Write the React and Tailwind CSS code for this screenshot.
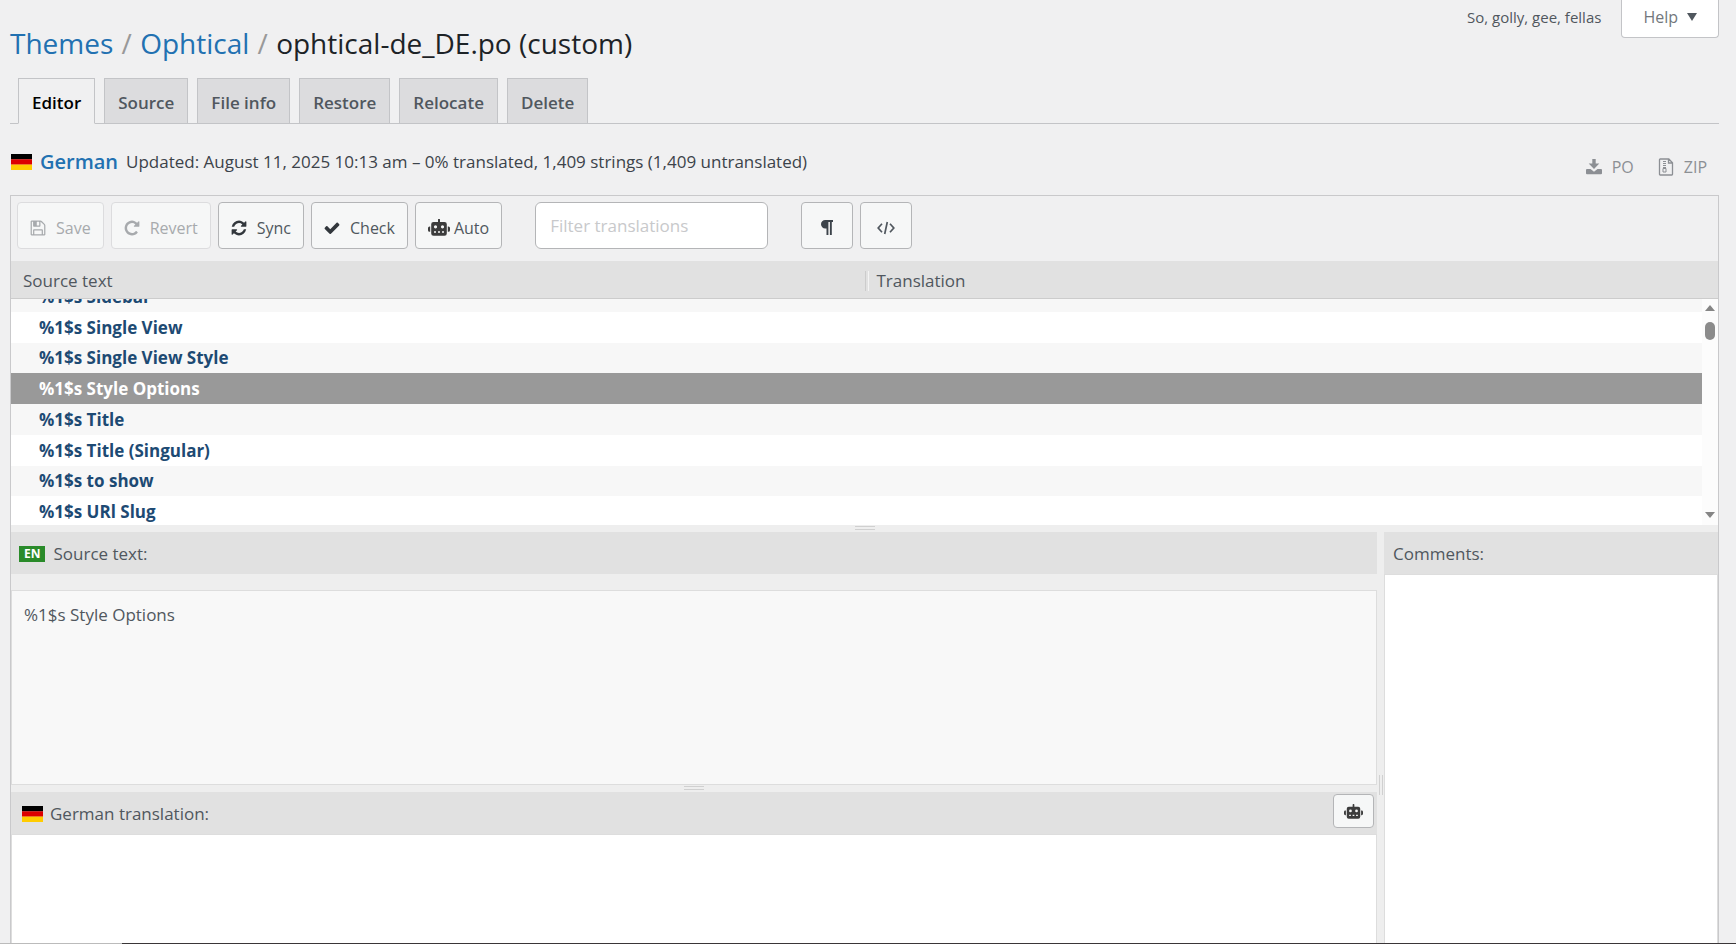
const TABS = ["Editor", "Source", "File info", "Restore", "Relocate", "Delete"];

const STRINGS = [
    "%1$s Sidebar",
    "%1$s Single View",
    "%1$s Single View Style",
    "%1$s Style Options",
    "%1$s Title",
    "%1$s Title (Singular)",
    "%1$s to show",
    "%1$s URl Slug",
];
const SELECTED = 3;

const PATHS = {
    save: "M512 1536h768v-384h-768v384zm896 0h128v-896q0-14-10-38.5t-20-34.5l-281-281q-10-10-34-20t-39-10v416q0 40-28 68t-68 28h-576q-40 0-68-28t-28-68v-416h-128v1280h128v-416q0-40 28-68t68-28h832q40 0 68 28t28 68v416zm-384-928v-320q0-13-9.5-22.5t-22.5-9.5h-192q-13 0-22.5 9.5t-9.5 22.5v320q0 13 9.5 22.5t22.5 9.5h192q13 0 22.5-9.5t9.5-22.5zm640 32v928q0 40-28 68t-68 28h-1344q-40 0-68-28t-28-68v-1344q0-40 28-68t68-28h928q40 0 88 20t76 48l280 280q28 28 48 76t20 88z",
    revert: "M1664 256v448q0 26-19 45t-45 19h-448q-42 0-59-40-17-39 14-69l138-138q-148-137-349-137-104 0-198.5 40.5t-163.5 109.5-109.5 163.5-40.5 198.5 40.5 198.5 109.5 163.5 163.5 109.5 198.5 40.5q119 0 225-52t179-147q7-10 23-12 15 0 25 9l137 138q9 8 9.5 20.5t-7.5 22.5q-109 132-264 204.5t-327 72.5q-156 0-298-61t-245-164-164-245-61-298 61-298 164-245 245-164 298-61q147 0 284.5 55.5t244.5 156.5l130-129q29-31 70-14 39 17 39 59z",
    sync: "M1639 1056q0 5-1 7-64 268-268 434.5t-478 166.5q-146 0-282.5-55t-243.5-157l-129 129q-19 19-45 19t-45-19-19-45v-448q0-26 19-45t45-19h448q26 0 45 19t19 45-19 45l-137 137q71 66 161 102t187 36q134 0 250-65t186-179q11-17 53-117 8-23 30-23h192q13 0 22.5 9.5t9.5 22.5zm25-800v448q0 26-19 45t-45 19h-448q-26 0-45-19t-19-45 19-45l138-138q-148-137-349-137-134 0-250 65t-186 179q-11 17-53 117-8 23-30 23h-199q-13 0-22.5-9.5t-9.5-22.5v-7q65-268 270-434.5t480-166.5q146 0 284 55.5t245 156.5l130-129q19-19 45-19t45 19 19 45z",
    check: "M1671 566q0 40-28 68l-724 724-136 136q-28 28-68 28t-68-28l-136-136-362-362q-28-28-28-68t28-68l136-136q28-28 68-28t68 28l294 295 656-657q28-28 68-28t68 28l136 136q28 28 28 68z",
};

const Icon = ({ name, className }) => (
    <svg viewBox="64 64 1664 1664" fill="currentColor" className={className} aria-hidden="true">
        <path d={PATHS[name]} />
    </svg>
);

const RobotIcon = ({ className }) => (
    <svg viewBox="0 0 22 17" fill="currentColor" className={className} aria-hidden="true">
        <path d="M0 9q0-1.600 1.600-1.600h.6v5.400h-.6Q0 12.800 0 11.200zM22 9q0-1.600-1.600-1.600h-.6v5.400h.6q1.600 0 1.600-1.600z" />
        <path
            fillRule="evenodd"
            d="M10 .8a1 1 0 0 1 2 0V3h4.500q2.300 0 2.300 2.300v9.200q0 2.300-2.300 2.300h-11q-2.300 0-2.300-2.300V5.300Q3.200 3 5.500 3H10zM7.500 6.200a1.600 1.600 0 1 0 0 3.200 1.600 1.600 0 0 0 0-3.200zm7 0a1.600 1.600 0 1 0 0 3.200 1.600 1.600 0 0 0 0-3.200zM6 12.300v1.500h2v-1.500zm4 0v1.500h2v-1.500zm4 0v1.500h2v-1.500z"
        />
    </svg>
);

const DownloadIcon = () => (
    <svg viewBox="0 0 16 16" fill="currentColor" className="size-4" aria-hidden="true">
        <path d="M6.300 0h3.400v4.600h3.600L8 10 2.700 4.600h3.600z" />
        <path d="M1 10h3.500L8 12.800l3.500-2.800H15q1 0 1 1v3.200q0 1-1 1H1q-1 0-1-1V11q0-1 1-1z" />
    </svg>
);

const ZipIcon = () => (
    <svg viewBox="0 0 16 18" fill="none" stroke="currentColor" className="h-[18px] w-4" aria-hidden="true">
        <path d="M2.200 1h8.600l3.700 3.700v11.600q0 .7-.7.7H2.200q-.7 0-.7-.7V1.700q0-.7.7-.7zM10.500 1v4h4" strokeWidth="1.3" />
        <path d="M6.500 3v8" strokeWidth="3" strokeDasharray="1 1" />
        <path d="M5 10.500h3V14H5z" />
    </svg>
);

const ParagraphIcon = () => (
    <svg viewBox="0 0 12 15" fill="currentColor" className="h-[15px] w-3" aria-hidden="true">
        <path d="M4.200 0H12v2h-1.200v13H8.900V2H7.400v13H5.500V8.400H4.200a4.200 4.200 0 0 1 0-8.400z" />
    </svg>
);

const CodeIcon = () => (
    <svg viewBox="0 0 18 14" fill="none" stroke="currentColor" strokeWidth="1.7" className="h-[14px] w-[18px]" aria-hidden="true">
        <path d="M5 2.800 1.200 7 5 11.200M13 2.800 16.800 7 13 11.200M10.300 1 7.700 13" />
    </svg>
);

const Flag = () => (
    <svg viewBox="0 0 21 16" className="h-4 w-[21px]" aria-hidden="true">
        <path fill="#000" d="M0 0h21v5.400H0z" />
        <path fill="#d00" d="M0 5.300h21v5.400H0z" />
        <path fill="#fc0" d="M0 10.600h21V16H0z" />
    </svg>
);

const ToolButton = ({ icon, children, disabled, gap = "gap-[10px]" }) => (
    <button
        type="button"
        disabled={disabled}
        className={`flex h-[47px] items-center rounded border px-3 pt-1 text-base ${gap} ${
            disabled
                ? "border-[#dcdcde] bg-[#f6f7f7] text-[#a7aaad]"
                : "border-[#b4b5b7] bg-[#f6f7f7] text-[#50575e]"
        }`}
    >
        {icon}
        {children}
    </button>
);

const Header = () => (
    <header>
        <div className="flex h-[78px] justify-between">
            <h1 className="pt-[23px] text-[28px] leading-10 text-[#1d2327]">
                <a href="#themes" className="text-[#2271b1]">Themes</a>
                <span className="mx-px text-[#999]"> / </span>
                <a href="#ophtical" className="text-[#2271b1]">Ophtical</a>
                <span className="mx-px text-[#999]"> / </span>
                ophtical-de_DE.po (custom)
            </h1>
            <div className="flex items-start">
                <p className="mr-5 pt-[7px] text-[15px] leading-5 text-[#50575e]">So, golly, gee, fellas</p>
                <button type="button" className="flex h-[38px] items-center gap-[9px] rounded-b border border-t-0 border-[#c3c4c7] bg-white px-[21px] pb-1 text-base text-[#72777c]">
                    Help
                    <svg viewBox="0 0 10 8" className="h-2 w-[10px] fill-[#50575e]" aria-hidden="true">
                        <path d="M0 0h10L5 8z" />
                    </svg>
                </button>
            </div>
        </div>
        <nav className="flex h-[46px] gap-[9px] border-b border-[#c3c4c7] pl-2">
            {TABS.map((tab, i) => (
                <a
                    key={tab}
                    href="#tab"
                    className={`flex items-center border border-[#c3c4c7] px-[13px] pt-1 text-[17px] font-semibold ${
                        i === 0 ? "-mb-px border-b-[#f0f0f1] bg-[#f0f0f1] text-black" : "border-b-0 bg-[#dcdcde] text-[#50575e]"
                    }`}
                >
                    {tab}
                </a>
            ))}
        </nav>
    </header>
);

const Summary = () => (
    <div className="flex h-[71px] justify-between pt-6">
        <p className="flex h-7 items-center pl-px text-[17px] text-[#3c434a]">
            <Flag />
            <a href="#german" className="mx-2 text-xl font-semibold text-[#2271b1]">German</a>
            Updated: August 11, 2025 10:13 am – 0% translated, 1,409 strings (1,409 untranslated)
        </p>
        <div className="mr-3 flex items-center gap-6 pb-[10px] text-base text-[#8c8f94]">
            <a href="#po" className="flex items-center gap-[10px]"><DownloadIcon />PO</a>
            <a href="#zip" className="flex items-center gap-[10px]"><ZipIcon />ZIP</a>
        </div>
    </div>
);

const Toolbar = () => (
    <div className="flex h-[65px] gap-[7px] px-[6px] pt-[6px]">
        <ToolButton disabled icon={<Icon name="save" className="size-4" />}>Save</ToolButton>
        <ToolButton disabled icon={<Icon name="revert" className="size-4" />}>Revert</ToolButton>
        <ToolButton icon={<Icon name="sync" className="size-4 text-[#32373c]" />}>Sync</ToolButton>
        <ToolButton icon={<Icon name="check" className="size-4 text-[#32373c]" />}>Check</ToolButton>
        <ToolButton gap="gap-1" icon={<RobotIcon className="h-[17px] w-[22px] text-[#3c3c3c]" />}>Auto</ToolButton>
        <input
            type="text"
            aria-label="Filter translations"
            placeholder="Filter translations"
            className="mx-[26px] h-[47px] w-[233px] rounded-md border border-[#b4b5b7] bg-white px-[14px] text-[17px] placeholder:text-[#c8c9cb]"
        />
        <button type="button" aria-label="Toggle invisibles" className="flex h-[47px] w-[52px] items-center justify-center rounded border border-[#b4b5b7] bg-[#f6f7f7] pt-1 text-[#3c434a]">
            <ParagraphIcon />
        </button>
        <button type="button" aria-label="Toggle code view" className="flex h-[47px] w-[52px] items-center justify-center rounded border border-[#b4b5b7] bg-[#f6f7f7] pt-1 text-[#50575e]">
            <CodeIcon />
        </button>
    </div>
);

const Scrollbar = () => (
    <div className="absolute right-0 bottom-0 flex h-[226px] w-4 flex-col items-center bg-[#fcfcfc] pt-[6px] pb-[7px]">
        <svg viewBox="0 0 10 6" className="h-[6px] w-[10px] fill-[#858585]" aria-hidden="true"><path d="M0 6h10L5 0z" /></svg>
        <div className="mt-[11px] h-[18px] w-[10px] rounded-full bg-[#8b8b8b]" />
        <svg viewBox="0 0 10 6" className="mt-auto h-[6px] w-[10px] fill-[#858585]" aria-hidden="true"><path d="M0 0h10L5 6z" /></svg>
    </div>
);

const StringList = () => (
    <div className="relative h-[264px] shrink-0 overflow-hidden bg-white">
        <table className="block">
            <thead className="block bg-[#e1e1e1] text-[17px] text-[#50575e]">
                <tr className="flex h-[38px] items-center border-b border-[#ccc] pt-0.5">
                    <th className="w-1/2 pl-3 text-left font-normal">Source text</th>
                    <th className="flex flex-1 items-center gap-2 text-left font-normal">
                        <span className="h-5 w-1 border-x border-l-[#ccc] border-r-[#f4f4f4]" />
                        Translation
                    </th>
                </tr>
            </thead>
            {/* the first row is mostly scrolled out of view */}
            <tbody className="grid h-[228px] grid-rows-[13px_repeat(7,minmax(0,1fr))] pr-4 text-[17px] leading-[30px] font-bold">
                {STRINGS.map((str, i) => (
                    <tr
                        key={str}
                        className={`flex items-end overflow-hidden ${
                            i === SELECTED ? "bg-[#999] text-white" : i % 2 ? "bg-white text-[#1d4a73]" : "bg-[#f7f7f7] text-[#1d4a73]"
                        }`}
                    >
                        <td className="w-1/2 pl-7">{str}</td>
                        <td className="flex-1" />
                    </tr>
                ))}
            </tbody>
        </table>
        <Scrollbar />
    </div>
);

const Grip = () => (
    <div className="flex h-[7px] shrink-0 justify-center bg-[#eee]">
        <span className="mt-px h-1 w-5 border-y border-[#d0d0d0]" />
    </div>
);

const Panes = () => (
    <div className="flex min-h-0 flex-1 bg-[#eee]">
        <div className="flex min-w-0 flex-1 flex-col">
            <label htmlFor="source" className="flex h-[42px] shrink-0 items-center gap-2 bg-[#e1e1e1] pt-0.5 pl-2 text-[17px] text-[#50575e]">
                <span className="bg-[#2a8b2a] px-[5px] text-xs leading-4 font-bold text-white">EN</span>
                Source text:
            </label>
            <textarea
                id="source"
                readOnly
                defaultValue="%1$s Style Options"
                className="mt-4 block h-[195px] w-full shrink-0 resize-none border border-[#ddd] bg-[#f8f8f8] px-3 py-3 text-[17px] leading-6 text-[#50575e]"
            />
            <Grip />
            <div className="flex h-[43px] shrink-0 items-start justify-between border-b border-[#ddd] bg-[#e1e1e1] pt-0.5 pr-[3px] pl-[11px]">
                <label htmlFor="target" className="flex h-10 items-center gap-[7px] text-[17px] text-[#50575e]">
                    <Flag />
                    German translation:
                </label>
                <button type="button" aria-label="Suggest translation" className="flex h-[34px] w-[41px] items-center justify-center rounded border border-[#b4b5b7] bg-[#f6f7f7] text-[#3c3c3c]">
                    <RobotIcon className="h-[15px] w-[19px]" />
                </button>
            </div>
            <textarea id="target" className="block w-full flex-1 resize-none border-x border-[#ddd] bg-white" />
        </div>
        <div className="flex w-[7px] items-center justify-center pt-[94px]">
            <span className="h-5 w-1 border-x border-[#d0d0d0]" />
        </div>
        <div className="flex w-[334px] flex-col">
            <label htmlFor="comments" className="flex h-[43px] shrink-0 items-center border-b border-[#ddd] bg-[#e1e1e1] pt-0.5 pl-[9px] text-[17px] text-[#50575e]">Comments:</label>
            <textarea id="comments" className="block w-full flex-1 resize-none border-x border-[#ddd] bg-white" />
        </div>
    </div>
);

export default function App() {
    return (
        <div className="flex h-screen flex-col overflow-hidden bg-[#f0f0f1] font-['Open_Sans','Noto_Sans',sans-serif]">
            <div className="flex min-h-0 flex-1 flex-col pr-[17px] pl-[10px]">
                <Header />
                <Summary />
                <main className="flex min-h-0 flex-1 flex-col border border-b-0 border-[#c9c9cb]">
                    <Toolbar />
                    <StringList />
                    <Grip />
                    <Panes />
                </main>
            </div>
            <div className="flex h-px shrink-0 bg-[#3a3638]">
                <span className="w-[122px] bg-[#bbb]" />
            </div>
        </div>
    );
}
